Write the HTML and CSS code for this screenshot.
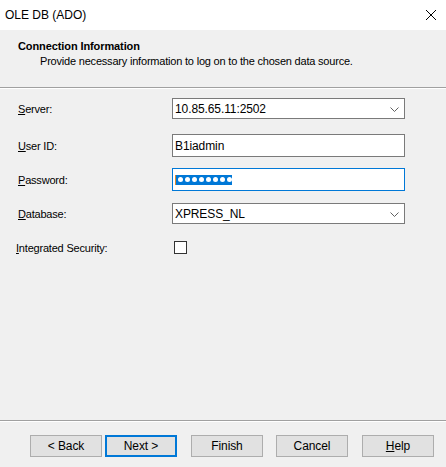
FILE: index.html
```html
<!DOCTYPE html>
<html>
<head>
<meta charset="utf-8">
<link rel="stylesheet" href="styles.css">
</head>
<body>
<div class="window">
  <div class="titlebar">
    <span class="title">OLE DB (ADO)</span>
    <svg class="close" width="12" height="12" viewBox="0 0 12 12"><path d="M1 1 L11 11 M11 1 L1 11" stroke="#000" stroke-width="1" fill="none"/></svg>
  </div>
  <div class="header">
    <div class="h-title">Connection Information</div>
    <div class="h-sub">Provide necessary information to log on to the chosen data source.</div>
  </div>
  <div class="content">
    <div class="row r-server">
      <label class="lbl"><u>S</u>erver:</label>
      <div class="combo"><span class="val">10.85.65.11:2502</span>
        <svg class="chev" width="9" height="5" viewBox="0 0 9 5"><path d="M0.5 0.5 L4.5 4.5 L8.5 0.5" stroke="#606060" stroke-width="1" fill="none"/></svg>
      </div>
    </div>
    <div class="row r-user">
      <label class="lbl"><u>U</u>ser ID:</label>
      <div class="input"><span class="val">B1iadmin</span></div>
    </div>
    <div class="row r-pass">
      <label class="lbl"><u>P</u>assword:</label>
      <div class="input focused"><span class="caret"></span><span class="sel"><i></i><i></i><i></i><i></i><i></i><i></i><i></i><i></i></span></div>
    </div>
    <div class="row r-db">
      <label class="lbl"><u>D</u>atabase:</label>
      <div class="combo"><span class="val">XPRESS_NL</span>
        <svg class="chev" width="9" height="5" viewBox="0 0 9 5"><path d="M0.5 0.5 L4.5 4.5 L8.5 0.5" stroke="#606060" stroke-width="1" fill="none"/></svg>
      </div>
    </div>
    <div class="row r-int">
      <label class="lbl lbl-int"><u>I</u>ntegrated Security:</label>
      <div class="check"></div>
    </div>
  </div>
  <div class="footer">
    <button class="btn">&lt; Back</button>
    <button class="btn btn-default">Next &gt;</button>
    <button class="btn gap">Finish</button>
    <button class="btn gap2">Cancel</button>
    <button class="btn gap"><u>H</u>elp</button>
  </div>
</div>
</body>
</html>
```
FILE: styles.css
```css
html, body {
  margin: 0;
  padding: 0;
  height: 100%;
}
body {
  font-family: "Liberation Sans", Arial, sans-serif;
  font-size: 11px;
  letter-spacing: -0.2px;
  color: #000;
  background: #f0f0f0;
}
.window {
  height: 467px;
  display: flex;
  flex-direction: column;
}
.titlebar {
  height: 30px;
  background: #fff;
  display: flex;
  align-items: center;
  justify-content: space-between;
  padding: 0 9px 0 5px;
  flex: none;
}
.title {
  font-size: 12px;
  letter-spacing: 0;
  margin-top: -1px;
}
.close {
  display: block;
  margin-top: -1px;
}
.header {
  height: 58px;
  box-sizing: border-box;
  padding: 10px 0 0 18px;
  border-bottom: 1px solid #a0a0a0;
  box-shadow: 0 1px 0 #fff;
  flex: none;
}
.h-title {
  font-weight: bold;
  line-height: 13px;
  letter-spacing: -0.1px;
}
.h-sub {
  padding-left: 22px;
  line-height: 13px;
  margin-top: 2px;
}
.content {
  flex: 1;
  padding: 10px 0 0 18px;
  border-bottom: 1px solid #a0a0a0;
  box-shadow: 0 1px 0 #fff;
}
.row {
  display: flex;
  align-items: center;
}
.lbl {
  width: 154px;
  flex: none;
}
.lbl-int {
  margin-left: -2px;
  width: 157px;
}
.combo, .input {
  box-sizing: border-box;
  width: 233px;
  background: #fff;
  border: 1px solid #7a7a7a;
  display: flex;
  align-items: center;
  padding-left: 2px;
  font-size: 12px;
  letter-spacing: -0.1px;
}
.combo { height: 21px; justify-content: space-between; padding-right: 5px; }
.input { height: 23px; }
.val { line-height: 14px; }
.chev { display: block; margin-top: 1px; }
.r-user { margin-top: 15px; }
.r-pass { margin-top: 11px; }
.r-db { margin-top: 12px; }
.r-int { margin-top: 17px; }
.input.focused {
  border-color: #0078d7;
  padding-left: 2px;
}
.caret {
  width: 1px;
  height: 10px;
  background: #e08a2c;
  flex: none;
}
.sel {
  display: flex;
  align-items: center;
  gap: 2px;
  background: #0078d7;
  height: 10px;
  width: 56px;
  padding-left: 2px;
  box-sizing: border-box;
}
.sel i {
  display: block;
  width: 5px;
  height: 5px;
  border-radius: 50%;
  background: #fff;
}
.check {
  box-sizing: border-box;
  width: 13px;
  height: 13px;
  border: 1px solid #333;
  background: #fff;
  margin-left: 1px;
}
.footer {
  flex: none;
  height: 46px;
  display: flex;
  align-items: flex-start;
  padding: 14px 0 0 30px;
  box-sizing: border-box;
}
.btn {
  width: 72px;
  height: 22px;
  box-sizing: border-box;
  background: #e1e1e1;
  border: 1px solid #adadad;
  font-family: "Liberation Sans", Arial, sans-serif;
  font-size: 12px;
  letter-spacing: -0.1px;
  color: #000;
  padding: 0;
  margin: 0 0 0 3px;
}
.btn:first-child { margin-left: 0; }
.btn-default { border: 2px solid #0078d7; }
.gap { margin-left: 14px; }
.gap2 { margin-left: 13px; }
```
